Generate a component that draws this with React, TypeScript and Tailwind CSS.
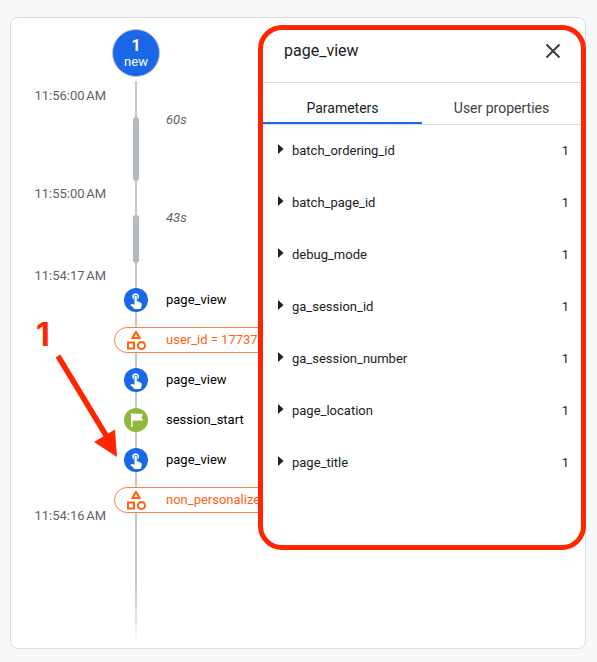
import { useState } from "react";
import { MdOutlineCategory, MdTouchApp } from "react-icons/md";

type EventKind = "tap" | "flag" | "property";

const events: { id: number; kind: EventKind; name: string }[] = [
  { id: 1, kind: "tap", name: "page_view" },
  { id: 2, kind: "property", name: "user_id = 17737" },
  { id: 3, kind: "tap", name: "page_view" },
  { id: 4, kind: "flag", name: "session_start" },
  { id: 5, kind: "tap", name: "page_view" },
  { id: 6, kind: "property", name: "non_personalized_ads" },
];

const parameters = [
  "batch_ordering_id",
  "batch_page_id",
  "debug_mode",
  "ga_session_id",
  "ga_session_number",
  "page_location",
  "page_title",
];

function FlagIcon() {
  return (
    <svg width="24" height="24" viewBox="0 0 24 24" fill="currentColor">
      <path d="M7 5h1.600v.8H19L17.600 9.200 19 12.600H8.600V19H7z" />
    </svg>
  );
}

function TimeRow({ children }: { children: string }) {
  return (
    <time className="block w-[95px] h-5 text-right leading-5 text-[#5f6368] whitespace-nowrap">
      {children}
    </time>
  );
}

function GapRow({ label, barClass }: { label: string; barClass: string }) {
  return (
    <div className="grid grid-cols-[95px_60px_1fr] mt-1 pb-[3px]">
      <span />
      <span className={`justify-self-center mt-[7px] w-[6px] rounded-full bg-[#b5b9c0] ${barClass}`} />
      <span className="leading-5 italic text-[#5f6368]">{label}</span>
    </div>
  );
}

function EventRow({ kind, name }: { kind: EventKind; name: string }) {
  if (kind === "property") {
    return (
      <button className="flex items-center h-[26px] ml-[103px] mr-4 border border-[#ff8243] rounded-full bg-white text-[#ff6310] overflow-hidden">
        <span className="flex justify-center w-[42px] mr-[9px] shrink-0">
          <MdOutlineCategory size={24} />
        </span>
        <span className="whitespace-nowrap">{name}</span>
      </button>
    );
  }

  return (
    <button className="grid grid-cols-[95px_60px_1fr] items-center h-[26px] text-left text-black">
      <span />
      <span
        className={`flex items-center justify-center justify-self-center size-6 rounded-full text-white ${
          kind === "flag" ? "bg-[#8fb83e]" : "bg-[#1a68e8]"
        }`}
      >
        {kind === "flag" ? <FlagIcon /> : <MdTouchApp size={18} />}
      </span>
      <span>{name}</span>
    </button>
  );
}

function DetailsPanel() {
  const [tab, setTab] = useState<"parameters" | "user">("parameters");
  const tabClass = "flex-1 h-full pt-[10px] text-sm border-b-2";

  return (
    <section className="absolute top-[7px] -right-px w-[328px] h-[525px] border-[5px] border-[#ff2600] rounded-3xl bg-white overflow-hidden text-[#202124]">
      <header className="flex items-center justify-between h-[53px] pl-[21px] pr-5 pb-[10px] border-b border-[#dadce0]">
        <h2 className="text-base">page_view</h2>
        <button aria-label="Close">
          <svg width="16" height="16" viewBox="0 0 16 16" stroke="#3c4043" strokeWidth="2">
            <path d="M1.500 1.500 14.500 14.500M14.500 1.500 1.500 14.500" />
          </svg>
        </button>
      </header>
      <div className="flex h-[42px] border-b border-[#dadce0]" role="tablist">
        <button
          role="tab"
          aria-selected={tab === "parameters"}
          onClick={() => setTab("parameters")}
          className={`${tabClass} ${tab === "parameters" ? "border-[#1a68e8] text-[#202124]" : "border-transparent text-[#3c4043]"}`}
        >
          Parameters
        </button>
        <button
          role="tab"
          aria-selected={tab === "user"}
          onClick={() => setTab("user")}
          className={`${tabClass} ${tab === "user" ? "border-[#1a68e8] text-[#202124]" : "border-transparent text-[#3c4043]"}`}
        >
          User properties
        </button>
      </div>
      {tab === "parameters" && (
        <ul>
          {parameters.map((name) => (
            <li key={name}>
              <button className="flex items-center w-full h-[52px] pl-[15px] pr-3">
                <svg width="6" height="10" viewBox="0 0 6 10" className="mr-2 mb-1" fill="#202124">
                  <path d="M0 0 5.500 5 0 10z" />
                </svg>
                <span>{name}</span>
                <span className="ml-auto">1</span>
              </button>
            </li>
          ))}
        </ul>
      )}
    </section>
  );
}

export default function App() {
  return (
    <main className="min-h-screen bg-[#f7f8fa] pt-[17px] pb-[13px] pl-[10px] pr-[11px] font-['Roboto',sans-serif] text-[13px]">
      <div className="relative border border-[#dadce0] rounded-lg bg-white pt-[11px] pb-[3px]">
        <div className="flex flex-col items-center justify-center size-12 ml-[101px] pt-0.5 border border-[#bdc1c6] rounded-full bg-[#1a68e8] text-white">
          <span className="text-base leading-4 font-bold">1</span>
          <span className="leading-4">new</span>
        </div>

        <div className="relative mt-1 pt-[5px]">
          <div className="absolute inset-y-0 left-[124px] w-0.5 bg-linear-to-b from-[#c8c8c8] from-90% to-white" />
          <div className="relative">
            <TimeRow>{"11:56:00\u202fAM"}</TimeRow>
            <GapRow label="60s" barClass="h-16" />
            <TimeRow>{"11:55:00\u202fAM"}</TimeRow>
            <GapRow label="43s" barClass="h-12" />
            <TimeRow>{"11:54:17\u202fAM"}</TimeRow>
            <div className="flex flex-col gap-[14px] pt-px">
              {events.map((e) => (
                <EventRow key={e.id} kind={e.kind} name={e.name} />
              ))}
            </div>
            <div className="-mt-[7px] pb-[119px]">
              <TimeRow>{"11:54:16\u202fAM"}</TimeRow>
            </div>
          </div>
        </div>

        <DetailsPanel />

        {/* callout pointing at the selected event */}
        <p className="absolute left-[25px] top-[297px] font-['Inter',sans-serif] text-[32px] leading-10 font-bold text-[#ff2600] pointer-events-none">
          1
        </p>
        <svg className="absolute left-[42px] top-[334px] pointer-events-none" width="68" height="108" viewBox="0 0 68 108" fill="#ff2600">
          <path d="M5 4 54 85" stroke="#ff2600" strokeWidth="5.500" />
          <path d="M64 105 41 90 62 77.500z" />
        </svg>
      </div>
    </main>
  );
}
